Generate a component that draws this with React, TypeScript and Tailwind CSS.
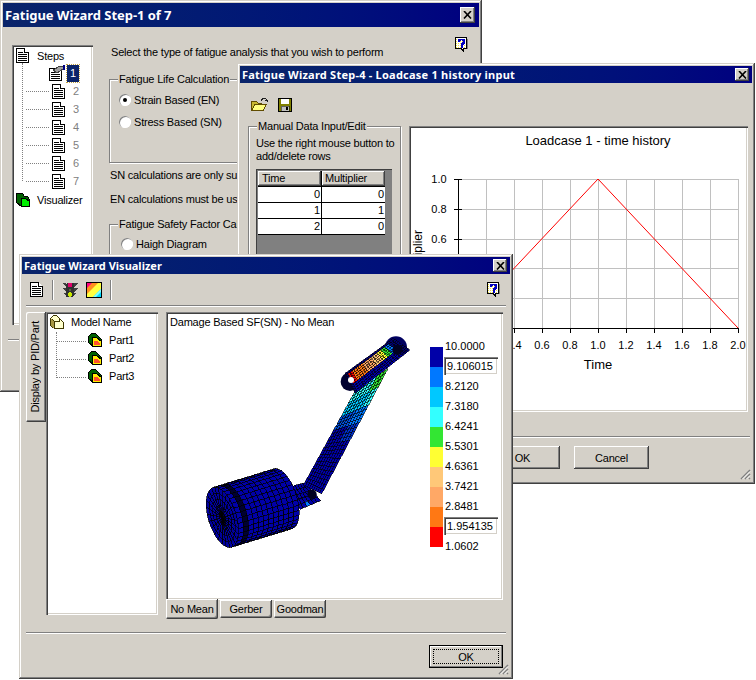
import React from 'react';

const RAISED = 'shadow-[inset_-1px_-1px_0_#404040,inset_1px_1px_0_#ffffff,inset_-2px_-2px_0_#808080]';
const SUNKEN = 'shadow-[inset_1px_1px_0_#808080,inset_2px_2px_0_#404040,inset_-1px_-1px_0_#ffffff,inset_-2px_-2px_0_#d4d0c8]';
const FRAME = 'shadow-[inset_-1px_-1px_0_#404040,inset_1px_1px_0_#d4d0c8,inset_-2px_-2px_0_#808080,inset_2px_2px_0_#ffffff]';

const PALETTE = ['#0000a8', '#0078ff', '#00c8ff', '#33ffff', '#33e633', '#ffff33', '#ffc878', '#ffa866', '#ff7814', '#ff0000'];

type Pt = [number, number];
type Cell = { pts: Pt[]; fill: string };

const poly = (pts: Pt[]) => pts.map((p) => p.join(',')).join(' ');

// piston: side of a cylinder plus the crown ellipse
function pistonCells(): Cell[] {
  const A: Pt = [0.956, -0.292];
  const N: Pt = [0.292, 0.956];
  const C: Pt = [97, 562];
  const R = 94;
  const r = 42;
  const L = 190;
  const at = (u: number, th: number, rad = R, rr = r): Pt => [
    C[0] + u * A[0] + rad * Math.sin(th) * N[0] + rr * Math.cos(th) * A[0],
    C[1] + u * A[1] + rad * Math.sin(th) * N[1] + rr * Math.cos(th) * A[1],
  ];
  const cells: Cell[] = [];
  const rings = 5;
  const spokes = 26;
  for (let i = 0; i < rings; i++) {
    for (let j = 0; j < spokes; j++) {
      const a0 = (j / spokes) * Math.PI * 2;
      const a1 = ((j + 1) / spokes) * Math.PI * 2;
      const f0 = i / rings;
      const f1 = (i + 1) / rings;
      cells.push({
        fill: '#0000a0',
        pts: [at(0, a0, R * f0, r * f0), at(0, a1, R * f0, r * f0), at(0, a1, R * f1, r * f1), at(0, a0, R * f1, r * f1)],
      });
    }
  }
  const nU = 12;
  const nT = 18;
  for (let i = 0; i < nU; i++) {
    for (let j = 0; j < nT; j++) {
      const u0 = (i / nU) * L;
      const u1 = ((i + 1) / nU) * L;
      const t0 = -Math.PI / 2 + (j / nT) * Math.PI;
      const t1 = -Math.PI / 2 + ((j + 1) / nT) * Math.PI;
      const groove = i === 1;
      cells.push({ fill: groove ? '#000030' : '#0000a8', pts: [at(u0, t0), at(u0, t1), at(u1, t1), at(u1, t0)] });
    }
  }
  return cells;
}

function strip(a0: Pt, a1: Pt, b0: Pt, b1: Pt, nS: number, nT: number, color: (s: number, t: number) => string): Cell[] {
  const lerp = (p: Pt, q: Pt, k: number): Pt => [p[0] + (q[0] - p[0]) * k, p[1] + (q[1] - p[1]) * k];
  const at = (s: number, t: number) => lerp(lerp(a0, a1, s), lerp(b0, b1, s), t);
  const cells: Cell[] = [];
  for (let i = 0; i < nS; i++) {
    for (let j = 0; j < nT; j++) {
      cells.push({
        fill: color((i + 0.5) / nS, (j + 0.5) / nT),
        pts: [at(i / nS, j / nT), at((i + 1) / nS, j / nT), at((i + 1) / nS, (j + 1) / nT), at(i / nS, (j + 1) / nT)],
      });
    }
  }
  return cells;
}

const rodCells = strip([340, 465], [498, 178], [395, 492], [594, 116], 28, 9, (s, t) => {
  if (s > 0.84) return t > 0.62 ? PALETTE[4] : PALETTE[3];
  if (s > 0.72) return t > 0.75 ? PALETTE[3] : PALETTE[2];
  if (s > 0.58) return t > 0.5 ? PALETTE[1] : '#0050e0';
  if (s > 0.42) return t > 0.5 ? '#0030c8' : PALETTE[0];
  return PALETTE[0];
});

const headCells = strip([465, 130], [610, 25], [495, 190], [660, 60], 24, 10, (s, t) => {
  if (t < 0.1 || s < 0.06 || s > 0.86) return '#000070';
  if (t > 0.55) return '#0000a8';
  if (s < 0.14) return PALETTE[9];
  if (s < 0.34) return PALETTE[8];
  if (s < 0.5) return PALETTE[7];
  if (s < 0.62) return PALETTE[6];
  if (s < 0.72) return PALETTE[5];
  if (s < 0.8) return PALETTE[4];
  return PALETTE[1];
});

const pinCells = strip([300, 470], [345, 458], [330, 538], [392, 512], 6, 5, (s, t) => (s > 0.35 && s < 0.55 && t > 0.7 ? PALETTE[1] : PALETTE[0]));

const Mesh = ({ cells, w = 2 }: { cells: Cell[]; w?: number }) => (
  <g stroke="#000000" strokeWidth={w} shapeRendering="crispEdges">
    {cells.map((c, i) => (
      <polygon key={i} points={poly(c.pts)} fill={c.fill} />
    ))}
  </g>
);

const Model = () => (
  <svg width="240" height="220" viewBox="0 0 720 660" className="absolute left-[24px] top-[18px]">
    <Mesh cells={pinCells} />
    <Mesh cells={pistonCells()} />
    <Mesh cells={rodCells} w={1.5} />
    <circle cx="366" cy="493" r="14" fill="#000020" />
    <circle cx="618" cy="52" r="33" fill="#000060" />
    <circle cx="480" cy="155" r="28" fill="#000030" />
    <Mesh cells={headCells} w={1.5} />
    <circle cx="483" cy="150" r="9" fill="#ffffff" />
    <circle cx="622" cy="60" r="15" fill="#000020" />
  </svg>
);

const CloseButton = ({ className = 'w-[14px] h-[13px]' }: { className?: string }) => (
  <div className={`bg-[#d4d0c8] flex items-center justify-center ${className} ${RAISED}`}>
    <svg width="9" height="8" viewBox="0 0 9 8">
      <path d="M1 0 L8 7.5 M8 0 L1 7.5" stroke="#000000" strokeWidth="1.6" />
    </svg>
  </div>
);

const TitleBar = ({ title, big, wide }: { title: string; big?: boolean; wide?: boolean }) => (
  <div
    className={`flex items-center justify-between bg-gradient-to-r from-[#0a246a] to-[#000080] text-white font-bold pl-[2px] pr-[3px] font-['Noto_Sans',sans-serif] ${
      big ? 'h-[24px] text-[13px] pr-[4px] tracking-[-0.05px]' : wide ? 'h-[17px] text-[11px] tracking-[0.23px]' : 'h-[17px] text-[11px] tracking-normal'
    }`}
  >
    <span className="whitespace-nowrap">{title}</span>
    <CloseButton className={big ? 'w-[15px] h-[16px]' : 'w-[14px] h-[13px]'} />
  </div>
);

const DocIcon = () => (
  <svg width="15" height="15" viewBox="0 0 15 15" shapeRendering="crispEdges" className="shrink-0">
    <path d="M1.5 0.5 H9.5 L13.5 4.5 V14.5 H1.5 Z" fill="#ffffff" stroke="#000000" />
    <path d="M9.5 0.5 V4.5 H13.5" fill="#ffffff" stroke="#000000" />
    <path d="M3 4.5 H8 M3 6.5 H12 M3 8.5 H12 M3 10.5 H12 M3 12.5 H12" stroke="#000000" />
  </svg>
);

const EditDocIcon = () => (
  <svg width="18" height="16" viewBox="0 0 18 16" shapeRendering="crispEdges" className="shrink-0">
    <path d="M1.5 3.5 H10.5 L13.5 6.5 V15.5 H1.5 Z" fill="#ffffff" stroke="#000000" />
    <path d="M3 7.5 H11 M3 9.5 H12 M3 11.5 H12 M3 13.5 H12" stroke="#000000" />
    <path d="M5 5 L12 1 H15 V4 L9 8 Z" fill="#a0a0a0" stroke="#404040" />
    <rect x="15" y="0" width="2" height="5" fill="#000080" />
  </svg>
);

const VisualizerIcon = () => (
  <svg width="14" height="14" viewBox="0 0 14 14" shapeRendering="crispEdges" className="shrink-0">
    <path d="M0.5 0.5 H6.5 L8.5 3.5 H11.5 L13.5 6.5 V13.5 H5.5 L0.5 9.5 Z" fill="#006000" stroke="#000000" />
    <path d="M5.5 5.5 H9.5 L13.5 8.5 V13.5 H5.5 Z" fill="#00ee00" stroke="#000000" />
  </svg>
);

const ModelIcon = () => (
  <svg width="14" height="14" viewBox="0 0 14 14" shapeRendering="crispEdges" className="shrink-0">
    <path d="M0.5 3.5 L3.5 0.5 H6.5 L9.5 3.5 L13 7 V13.5 H4.5 L0.5 10.5 Z" fill="#ffffcc" stroke="#403800" />
    <path d="M0.5 3.5 L4.5 6.5 V13.5 M4.5 6.5 H9.5 V3.5" fill="none" stroke="#403800" />
    <path d="M1 4 L4 6.5 V13 L1 10.5 Z" fill="#a89840" />
  </svg>
);

const PartIcon = () => (
  <svg width="14" height="14" viewBox="0 0 14 14" shapeRendering="crispEdges" className="shrink-0">
    <path d="M0.5 3.5 L3.5 0.5 H7.5 L13.5 6.5 V13.5 H5.5 L0.5 9.5 Z" fill="#006000" stroke="#000000" />
    <path d="M4.5 4.5 H8.5 L13.5 8.5 V13.5 H4.5 Z" fill="#ffee00" stroke="#000000" />
    <path d="M6 8 H9 L12 11 V12 H6 Z" fill="#ff5030" />
  </svg>
);

const FolderIcon = () => (
  <svg width="17" height="13" viewBox="0 0 17 13" shapeRendering="crispEdges">
    <path d="M0.5 3.5 H5.5 L7 5 H10.5 V12.5 H0.5 Z" fill="#c8b830" stroke="#604c00" />
    <path d="M0.5 12.5 L4 6.5 H15.5 L12 12.5 Z" fill="#ffff80" stroke="#604c00" />
    <path d="M10 2.5 L12 0.5 H14.5 L16 2.5 M16 2.5 L16 4 M14 2.5 H16.5" fill="none" stroke="#202020" />
  </svg>
);

const FloppyIcon = () => (
  <svg width="14" height="14" viewBox="0 0 14 14" shapeRendering="crispEdges">
    <rect x="0.5" y="0.5" width="13" height="13" fill="#808000" stroke="#000000" />
    <rect x="3" y="1" width="8" height="5" fill="#ffffff" />
    <rect x="3" y="8" width="8" height="5" fill="#c0c0c0" stroke="#000000" strokeWidth="0.5" />
    <rect x="8" y="9" width="2" height="3" fill="#000000" />
  </svg>
);

const TrafficIcon = () => (
  <svg width="16" height="16" viewBox="0 0 16 16" shapeRendering="crispEdges">
    <rect x="4" y="1" width="8" height="14" rx="2" fill="#303030" />
    <path d="M0 1 H4 V5 Z M16 1 H12 V5 Z M0 6 H4 V10 Z M16 6 H12 V10 Z M1 11 H4 V13 Z M15 11 H12 V13 Z" fill="#404040" />
    <circle cx="8" cy="3" r="2.5" fill="#e0006a" />
    <circle cx="8" cy="8" r="1.5" fill="#606040" />
    <circle cx="8" cy="12.5" r="2.2" fill="#c8e800" />
  </svg>
);

const ColorIcon = () => (
  <svg width="16" height="16" viewBox="0 0 16 16">
    <rect width="16" height="16" fill="#00d8ff" />
    <path d="M0 0 H16 V6 L6 16 H0 Z" fill="#ffff40" />
    <path d="M0 0 H13 L0 13 Z" fill="#ff9020" />
    <path d="M0 0 H7 L0 7 Z" fill="#ff0080" />
    <path d="M16 6 V9 L9 16 H6 Z" fill="#80ffff" />
    <rect x="0.5" y="0.5" width="15" height="15" fill="none" stroke="#000000" />
  </svg>
);

const HelpIcon = () => (
  <svg width="15" height="15" viewBox="0 0 15 15" shapeRendering="crispEdges">
    <defs>
      <pattern id="helpDots" width="2" height="2" patternUnits="userSpaceOnUse">
        <rect width="2" height="2" fill="#ffffff" />
        <rect width="1" height="1" fill="#f0e040" />
      </pattern>
    </defs>
    <path d="M1.5 0.5 H12.5 V11.5 H9.5 V14 L7 11.5 H1.5 Z" fill="url(#helpDots)" stroke="#000000" />
    <rect x="13" y="2" width="1" height="10" fill="#808080" />
    <path d="M5 5 V3 H6 V2.5 H9 V3 H10 V6 H9 V7 H8 V8.5 M7 10 H8.5" fill="none" stroke="#0000c0" strokeWidth="1.4" />
  </svg>
);

const Grip = () => (
  <svg width="12" height="12" viewBox="0 0 12 12" className="absolute right-[4px] bottom-[4px]">
    <path d="M11 2 L2 11 M11 6 L6 11 M11 10 L10 11" stroke="#808080" strokeWidth="1.5" />
    <path d="M11 3.5 L3.5 11 M11 7.5 L7.5 11" stroke="#ffffff" />
  </svg>
);

const Radio = ({ on }: { on?: boolean }) => (
  <span className="relative inline-flex w-[12px] h-[12px] rounded-full bg-white items-center justify-center shrink-0 shadow-[inset_1px_1px_0_#808080,inset_-1px_-1px_0_#ffffff,0_0_0_1px_#d4d0c8]">
    {on && <span className="w-[4px] h-[4px] rounded-full bg-black" />}
  </span>
);

const Etched = ({ title, className, children }: { title: string; className: string; children?: React.ReactNode }) => (
  <div className={`relative border border-[#808080] shadow-[1px_1px_0_#ffffff,inset_1px_1px_0_#ffffff] ${className}`}>
    <span className="absolute left-[8px] top-[-8px] bg-[#d4d0c8] px-[1px] leading-[14px] whitespace-nowrap">{title}</span>
    {children}
  </div>
);

const WizardWindow = () => (
  <div className={`absolute left-0 top-0 w-[482px] h-[392px] bg-[#d4d0c8] p-[3px] overflow-hidden ${FRAME}`}>
    <TitleBar title="Fatigue Wizard Step-1 of 7" big />
    <div className="flex pl-[9px] pt-[18px]">
      <div className={`relative w-[81px] h-[280px] bg-white shrink-0 pl-[3px] pt-[2px] ${SUNKEN}`}>
        <div className="absolute left-[10px] top-[18px] h-[118px] border-l border-dotted border-[#808080]" />
        <div className="flex items-center h-[17px]">
          <DocIcon />
          <span className="ml-[7px]">Steps</span>
        </div>
        <div className="flex items-center h-[18px] pl-[33px]">
          <EditDocIcon />
          <span className="ml-[1px] bg-[#0a246a] text-white px-[3px] leading-[17px] outline-1 outline-dotted outline-[#c0a040]">1</span>
        </div>
        {['2', '3', '4', '5', '6', '7'].map((n) => (
          <div key={n} className="relative flex items-center h-[18px] pl-[36px]">
            <span className="absolute left-[11px] w-[23px] border-t border-dotted border-[#808080]" />
            <DocIcon />
            <span className="ml-[7px] text-[#808080]">{n}</span>
          </div>
        ))}
        <div className="flex items-center h-[20px] pl-[1px]">
          <VisualizerIcon />
          <span className="ml-[7px]">Visualizer</span>
        </div>
      </div>
      <div className="ml-[16px] grow">
        <div className="flex justify-between pr-[10px]">
          <span className="ml-[2px]">Select the type of fatigue analysis that you wish to perform</span>
          <span className="mt-[-8px]">
            <HelpIcon />
          </span>
        </div>
        <Etched title="Fatigue Life Calculation" className="mt-[20px] h-[84px] pl-[9px] pt-[9px]">
          <div className="flex items-center gap-[3px] h-[22px]">
            <Radio on />
            <span>Strain Based (EN)</span>
          </div>
          <div className="flex items-center gap-[3px] h-[22px]">
            <Radio />
            <span>Stress Based (SN)</span>
          </div>
        </Etched>
        <p className="mt-[5px] ml-[1px]">SN calculations are only su</p>
        <p className="mt-[10px] ml-[1px]">EN calculations must be us</p>
        <Etched title="Fatigue Safety Factor Cal" className="mt-[18px] h-[100px] pl-[11px] pt-[10px]">
          <div className="flex items-center gap-[3px] h-[18px]">
            <Radio />
            <span>Haigh Diagram</span>
          </div>
        </Etched>
      </div>
    </div>
    <div className="mt-[14px] mx-[5px] h-[2px] bg-[#808080] border-b border-white" />
  </div>
);

const ChartPanel = () => {
  const xs = [0, 0.2, 0.4, 0.6, 0.8, 1, 1.2, 1.4, 1.6, 1.8, 2];
  const ys = [0, 0.2, 0.4, 0.6, 0.8, 1];
  const X = (v: number) => 49 + v * 140;
  const Y = (v: number) => Math.round(202 - v * 149);
  return (
    <div className={`w-[339px] h-[286px] bg-white shrink-0 ${SUNKEN}`}>
      <svg width="339" height="286" viewBox="0 0 339 286" className="tracking-normal font-['Liberation_Sans',sans-serif]">
        <text x="189" y="19" fontSize="13" textAnchor="middle" fill="#000">
          Loadcase 1 - time history
        </text>
        {xs.map((v) => (
          <path key={v} d={`M${X(v) + 0.5} 53 V206`} stroke={v === 0 ? '#000000' : '#c0c0c0'} shapeRendering="crispEdges" />
        ))}
        {ys.map((v) => (
          <path key={v} d={`M45 ${Y(v) + 0.5} H${X(2) + 1}`} stroke={v === 0 ? '#000000' : '#c0c0c0'} shapeRendering="crispEdges" />
        ))}
        {xs.map((v) => (
          <path key={v} d={`M${X(v) + 0.5} 202 V207`} stroke="#000000" shapeRendering="crispEdges" />
        ))}
        {ys.map((v) => (
          <path key={v} d={`M45 ${Y(v) + 0.5} H53`} stroke="#000000" shapeRendering="crispEdges" />
        ))}
        <path d={`M${X(0)} ${Y(0)} L${X(1)} ${Y(1)} L${X(2)} ${Y(0)}`} fill="none" stroke="#ff0000" />
        {ys.map((v) => (
          <text key={v} x="30" y={Y(v) + 4} fontSize="11" fill="#000" textAnchor="middle">
            {v.toFixed(1)}
          </text>
        ))}
        {xs.slice(2).map((v) => (
          <text key={v} x={X(v)} y="223" fontSize="11" fill="#000" textAnchor="middle">
            {v.toFixed(1)}
          </text>
        ))}
        <text x="189" y="243" fontSize="13" fill="#000" textAnchor="middle">
          Time
        </text>
        <text transform="translate(13 128) rotate(-90)" fontSize="12" fill="#000" textAnchor="middle">
          Multiplier
        </text>
      </svg>
    </div>
  );
};

const HistoryWindow = () => (
  <div className={`absolute left-[237px] top-[63px] w-[518px] h-[421px] bg-[#d4d0c8] p-[3px] overflow-hidden ${FRAME}`}>
    <TitleBar title="Fatigue Wizard Step-4 - Loadcase 1 history input" wide />
    <div className="flex items-center h-[43px] pl-[11px] gap-[10px]">
      <FolderIcon />
      <FloppyIcon />
    </div>
    <div className="flex pl-[8px] gap-[8px]">
      <Etched title="Manual Data Input/Edit" className="w-[153px] h-[286px] px-[7px] pt-[10px]">
        <p className="leading-[13px] whitespace-nowrap">Use the right mouse button to</p>
        <p className="leading-[13px] whitespace-nowrap">add/delete rows</p>
        <div className="mt-[6px] w-[136px] h-[90px] bg-[#808080] p-[2px] shadow-[inset_1px_1px_0_#404040]">
          <div className="grid grid-cols-[63px_63px] bg-black gap-px w-[127px] border-b border-black">
            <div className={`bg-[#d4d0c8] h-[15px] pl-[4px] leading-[15px] ${RAISED}`}>Time</div>
            <div className={`bg-[#d4d0c8] h-[15px] pl-[3px] leading-[15px] ${RAISED}`}>Multiplier</div>
            {['0', '0', '1', '1', '2', '0'].map((v, i) => (
              <div key={i} className="bg-white h-[15px] text-right pr-[1px] leading-[15px]">
                {v}
              </div>
            ))}
          </div>
        </div>
      </Etched>
      <ChartPanel />
    </div>
    <div className="mt-[24px] mx-[2px] h-[2px] bg-[#808080] border-b border-white" />
    <div className="flex justify-end gap-[14px] mt-[8px] pr-[103px]">
      {['OK', 'Cancel'].map((t) => (
        <div key={t} className={`w-[75px] h-[23px] bg-[#d4d0c8] flex items-center justify-center ${RAISED}`}>
          {t}
        </div>
      ))}
    </div>
    <Grip />
  </div>
);

const LEGEND_ROWS: { label: string; input?: boolean }[] = [
  { label: '10.0000' },
  { label: '9.106015', input: true },
  { label: '8.2120' },
  { label: '7.3180' },
  { label: '6.4241' },
  { label: '5.5301' },
  { label: '4.6361' },
  { label: '3.7421' },
  { label: '2.8481' },
  { label: '1.954135', input: true },
  { label: '1.0602' },
];

const Legend = () => (
  <div className="absolute left-[264px] top-[34px] flex tracking-normal">
    <div className="w-[13px] flex flex-col mt-[1px]">
      {PALETTE.map((c) => (
        <div key={c} className="h-[20px]" style={{ background: c }} />
      ))}
    </div>
    <div className="ml-[1px] flex flex-col mt-[-10px]">
      {LEGEND_ROWS.map((r) =>
        r.input ? (
          <div key={r.label} className={`w-[54px] h-[18px] my-[1px] pl-[3px] bg-white leading-[18px] ${SUNKEN}`}>
            {r.label}
          </div>
        ) : (
          <div key={r.label} className="h-[20px] leading-[20px] pl-[1px]">
            {r.label}
          </div>
        ),
      )}
    </div>
  </div>
);

const VisualizerWindow = () => (
  <div className={`absolute left-[19px] top-[254px] w-[494px] h-[425px] bg-[#d4d0c8] p-[3px] overflow-hidden ${FRAME}`}>
    <TitleBar title="Fatigue Wizard Visualizer" />
    <div className="flex items-center h-[31px] pl-[7px] pr-[9px]">
      <DocIcon />
      <div className="ml-[8px] h-[20px] w-[2px] bg-[#808080] border-r border-white" />
      <div className="ml-[8px]">
        <TrafficIcon />
      </div>
      <div className="ml-[8px]">
        <ColorIcon />
      </div>
      <div className="ml-[8px] h-[20px] w-[2px] bg-[#808080] border-r border-white" />
      <div className="ml-auto">
        <HelpIcon />
      </div>
    </div>
    <div className="mx-[4px] h-[2px] bg-[#808080] border-b border-white" />
    <div className="flex pl-[4px] mt-[5px]">
      <div className={`w-[20px] h-[110px] bg-[#d4d0c8] flex items-center justify-center pr-[2px] rounded-l-[2px] shrink-0 ${RAISED}`}>
        <span className="whitespace-nowrap [writing-mode:vertical-rl] rotate-180">Display by PID/Part</span>
      </div>
      <div className={`relative w-[112px] h-[303px] bg-white shrink-0 pl-[4px] pt-[3px] ${SUNKEN}`}>
        <div className="absolute left-[10px] top-[20px] h-[46px] border-l border-dotted border-[#808080]" />
        <div className="flex items-center h-[14px] mb-[2px]">
          <ModelIcon />
          <span className="ml-[7px]">Model Name</span>
        </div>
        {['Part1', 'Part2', 'Part3'].map((p) => (
          <div key={p} className="relative flex items-center h-[18px] pl-[38px]">
            <span className="absolute left-[7px] top-[10px] w-[29px] border-t border-dotted border-[#808080]" />
            <PartIcon />
            <span className="ml-[7px]">{p}</span>
          </div>
        ))}
      </div>
      <div className="ml-[8px] w-[337px] shrink-0">
        <div className={`relative h-[288px] bg-white pl-[4px] pt-[3px] ${SUNKEN}`}>
          <span>Damage Based SF(SN) - No Mean</span>
          <Model />
          <Legend />
        </div>
        <div className="flex items-start gap-[2px]">
          <div className={`relative z-10 w-[52px] h-[20px] -mt-[1px] bg-[#d4d0c8] rounded-b-[2px] flex items-center justify-center ${RAISED}`}>No Mean</div>
          <div className={`w-[52px] h-[18px] bg-[#d4d0c8] rounded-b-[2px] flex items-center justify-center ${RAISED}`}>Gerber</div>
          <div className={`w-[52px] h-[18px] bg-[#d4d0c8] rounded-b-[2px] flex items-center justify-center ${RAISED}`}>Goodman</div>
        </div>
      </div>
    </div>
    <div className="mt-[13px] mx-[4px] h-[2px] bg-[#808080] border-b border-white" />
    <div className="flex justify-end mt-[11px] pr-[7px]">
      <div className="w-[74px] h-[23px] bg-[#d4d0c8] flex items-center justify-center border border-black shadow-[inset_-1px_-1px_0_#808080,inset_1px_1px_0_#ffffff]">
        <span className="flex items-center justify-center w-[66px] h-[15px] border border-dotted border-black">OK</span>
      </div>
    </div>
    <Grip />
  </div>
);

export default function App() {
  return (
    <div className="relative w-[756px] h-[680px] bg-white overflow-hidden text-[11px] leading-[14px] tracking-[-0.2px] text-black font-['Liberation_Sans',sans-serif]">
      <WizardWindow />
      <HistoryWindow />
      <VisualizerWindow />
    </div>
  );
}
